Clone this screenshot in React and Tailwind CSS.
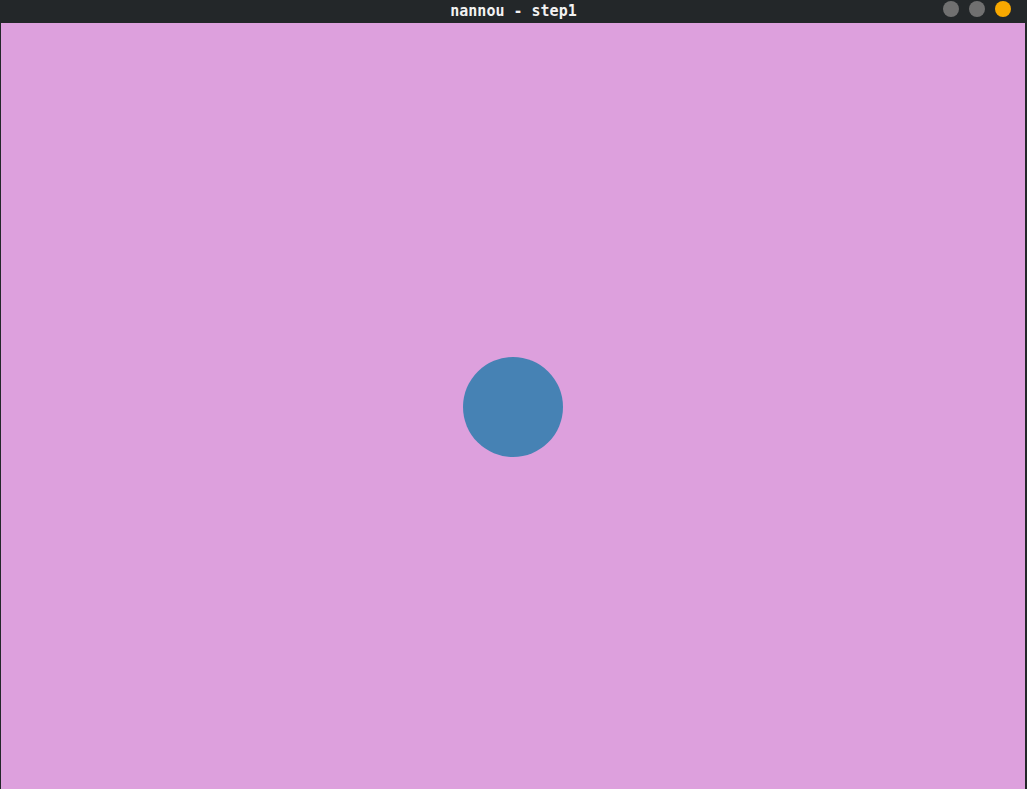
export default function App() {
  return (
    <div className="flex h-[789px] w-[1027px] flex-col overflow-hidden bg-[#232729]">
      <div className="relative flex h-[23px] shrink-0 items-center justify-center">
        <span className="font-['DejaVu_Sans_Mono',monospace] text-[15px] font-bold leading-none text-[#f2f2f2]">
          nannou - step1
        </span>
        <div className="absolute right-[16px] top-[1px] flex gap-[10px]">
          <span className="h-[16px] w-[16px] rounded-full bg-[#707070]" />
          <span className="h-[16px] w-[16px] rounded-full bg-[#707070]" />
          <span className="h-[16px] w-[16px] rounded-full bg-[#f8a800]" />
        </div>
      </div>
      <div className="ml-[1px] mr-[2px] flex flex-1 items-center justify-center bg-[#dda0dd]">
        <div className="mt-[2px] h-[100px] w-[100px] rounded-full bg-[#4682b4]" />
      </div>
    </div>
  );
}
